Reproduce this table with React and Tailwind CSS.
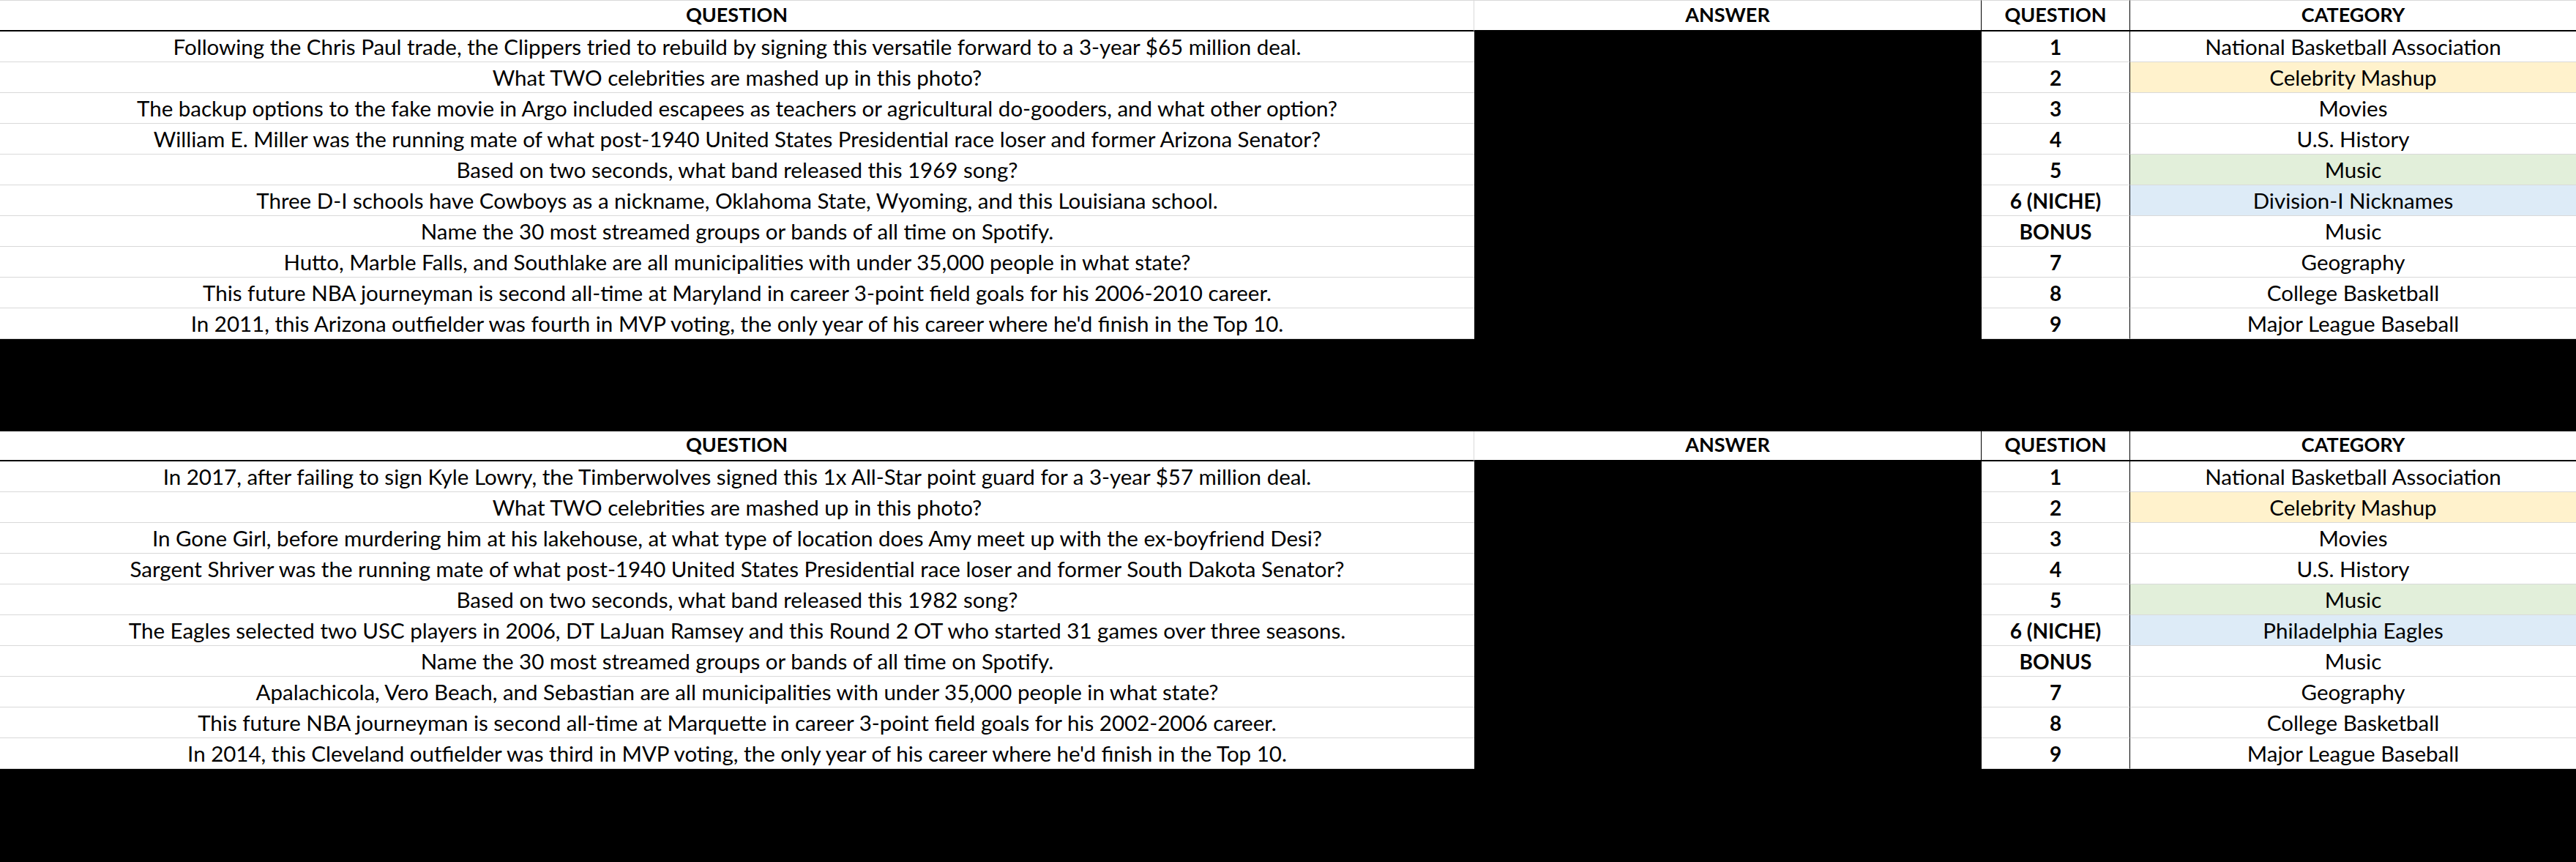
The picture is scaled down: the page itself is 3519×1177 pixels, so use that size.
const firstRound = [
  ["Following the Chris Paul trade, the Clippers tried to rebuild by signing this versatile forward to a 3-year $65 million deal.", "1", "National Basketball Association", ""],
  ["What TWO celebrities are mashed up in this photo?", "2", "Celebrity Mashup", "bg-[#fff2cc]"],
  ["The backup options to the fake movie in Argo included escapees as teachers or agricultural do-gooders, and what other option?", "3", "Movies", ""],
  ["William E. Miller was the running mate of what post-1940 United States Presidential race loser and former Arizona Senator?", "4", "U.S. History", ""],
  ["Based on two seconds, what band released this 1969 song?", "5", "Music", "bg-[#e2efda]"],
  ["Three D-I schools have Cowboys as a nickname, Oklahoma State, Wyoming, and this Louisiana school.", "6 (NICHE)", "Division-I Nicknames", "bg-[#ddebf7]"],
  ["Name the 30 most streamed groups or bands of all time on Spotify.", "BONUS", "Music", ""],
  ["Hutto, Marble Falls, and Southlake are all municipalities with under 35,000 people in what state?", "7", "Geography", ""],
  ["This future NBA journeyman is second all-time at Maryland in career 3-point field goals for his 2006-2010 career.", "8", "College Basketball", ""],
  ["In 2011, this Arizona outfielder was fourth in MVP voting, the only year of his career where he'd finish in the Top 10.", "9", "Major League Baseball", ""]
];

const secondRound = [
  ["In 2017, after failing to sign Kyle Lowry, the Timberwolves signed this 1x All-Star point guard for a 3-year $57 million deal.", "1", "National Basketball Association", ""],
  ["What TWO celebrities are mashed up in this photo?", "2", "Celebrity Mashup", "bg-[#fff2cc]"],
  ["In Gone Girl, before murdering him at his lakehouse, at what type of location does Amy meet up with the ex-boyfriend Desi?", "3", "Movies", ""],
  ["Sargent Shriver was the running mate of what post-1940 United States Presidential race loser and former South Dakota Senator?", "4", "U.S. History", ""],
  ["Based on two seconds, what band released this 1982 song?", "5", "Music", "bg-[#e2efda]"],
  ["The Eagles selected two USC players in 2006, DT LaJuan Ramsey and this Round 2 OT who started 31 games over three seasons.", "6 (NICHE)", "Philadelphia Eagles", "bg-[#ddebf7]"],
  ["Name the 30 most streamed groups or bands of all time on Spotify.", "BONUS", "Music", ""],
  ["Apalachicola, Vero Beach, and Sebastian are all municipalities with under 35,000 people in what state?", "7", "Geography", ""],
  ["This future NBA journeyman is second all-time at Marquette in career 3-point field goals for his 2002-2006 career.", "8", "College Basketball", ""],
  ["In 2014, this Cleveland outfielder was third in MVP voting, the only year of his career where he'd finish in the Top 10.", "9", "Major League Baseball", ""]
];

function Sheet({ rows, first }) {
  const head = first
    ? "h-[43px] border-t border-t-[#d9d9d9] border-b-2 border-b-black"
    : "h-[41px] border-b-2 border-b-black";
  const cell = "flex h-[42px] items-end justify-center whitespace-nowrap border-b border-b-[#d9d9d9] pb-[6px]";

  return <div className="grid grid-cols-[2014px_693px_203px_1fr] bg-white">
      <div className={`${head} flex items-end justify-center border-r border-r-[#d9d9d9] pb-[8px] text-[27px] font-bold`}>QUESTION</div>
      <div className={`${head} flex items-end justify-center border-r border-r-black pb-[8px] text-[27px] font-bold`}>ANSWER</div>
      <div className={`${head} flex items-end justify-center border-r border-r-black pb-[8px] text-[27px] font-bold`}>QUESTION</div>
      <div className={`${head} flex items-end justify-center pb-[8px] text-[27px] font-bold`}>CATEGORY</div>

      {rows.map(([question, num, category, fill]) => <div key={question} className="contents">
          <div className={cell}>{question}</div>
          <div className="h-[42px] border-r border-r-black bg-black" />
          <div className={`${cell} border-r border-r-black text-[28px] font-bold`}>{num}</div>
          <div className={`${cell} ${fill}`}>{category}</div>
        </div>)}
    </div>;
}

export default function App() {
  return <div className="h-[1177px] w-[3519px] overflow-hidden bg-black font-['Lato',sans-serif] text-[29.5px] leading-none text-black">
      <Sheet rows={firstRound} first />
      <div className="h-[126px] bg-black" />
      <Sheet rows={secondRound} />
    </div>;
}
